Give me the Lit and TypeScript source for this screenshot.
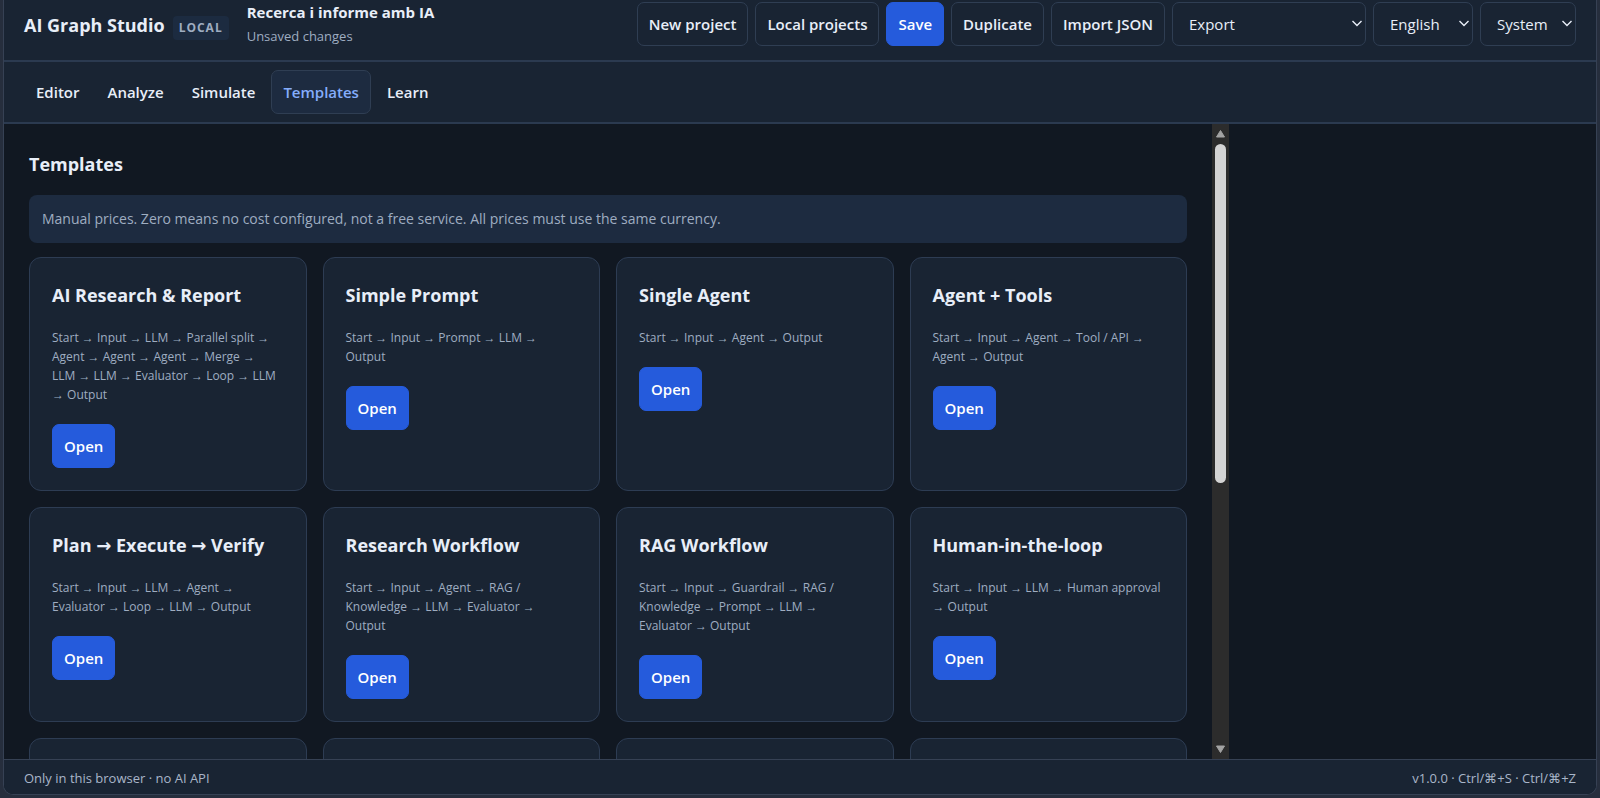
import { LitElement, html, css } from "lit";
import { customElement, property, state } from "lit/decorators.js";

interface Template {
  name: string;
  flow: string[];
}

const TEMPLATES: Template[] = [
  { name: "AI Research & Report", flow: ["Start", "Input", "LLM", "Parallel split", "Agent", "Agent", "Agent", "Merge", "LLM", "LLM", "Evaluator", "Loop", "LLM", "Output"] },
  { name: "Simple Prompt", flow: ["Start", "Input", "Prompt", "LLM", "Output"] },
  { name: "Single Agent", flow: ["Start", "Input", "Agent", "Output"] },
  { name: "Agent + Tools", flow: ["Start", "Input", "Agent", "Tool / API", "Agent", "Output"] },
  { name: "Plan → Execute → Verify", flow: ["Start", "Input", "LLM", "Agent", "Evaluator", "Loop", "LLM", "Output"] },
  { name: "Research Workflow", flow: ["Start", "Input", "Agent", "RAG / Knowledge", "LLM", "Evaluator", "Output"] },
  { name: "RAG Workflow", flow: ["Start", "Input", "Guardrail", "RAG / Knowledge", "Prompt", "LLM", "Evaluator", "Output"] },
  { name: "Human-in-the-loop", flow: ["Start", "Input", "LLM", "Human approval", "Output"] },
];

const TABS = ["Editor", "Analyze", "Simulate", "Templates", "Learn"];

const controls = css`
  button {
    box-sizing: border-box;
    height: 44px;
    margin: 0;
    padding: 0 11px;
    border: 1px solid #2f3e53;
    border-radius: 7px;
    background: transparent;
    color: #e8eef8;
    font: 600 15px/20px "Open Sans", "Noto Sans", sans-serif;
    white-space: nowrap;
    cursor: pointer;
  }
  .primary {
    border-color: #255bdc;
    background: #255bdc;
    color: #ffffff;
  }
`;

@customElement("menu-select")
export class MenuSelect extends LitElement {
  static styles = css`
    :host {
      display: block;
    }
    .box {
      display: grid;
      align-items: center;
    }
    select {
      grid-area: 1 / 1;
      box-sizing: border-box;
      width: 100%;
      height: 44px;
      margin: 0;
      padding: 0 20px 0 16px;
      border: 1px solid #2f3e53;
      border-radius: 7px;
      background: #192433;
      color: #e8eef8;
      font: 400 15px/20px "Open Sans", "Noto Sans", sans-serif;
      appearance: none;
    }
    svg {
      grid-area: 1 / 1;
      justify-self: end;
      margin-right: 3px;
      pointer-events: none;
    }
  `;
  @property() label = "";
  @property() value = "";

  render() {
    return html`<div class="box">
      <select aria-label=${this.label}>
        <option>${this.value}</option>
      </select>
      <svg width="12" height="12" viewBox="0 0 12 12" fill="none" stroke="#e8eef8" stroke-width="1.4">
        <path d="M1.5 3 6 7.5 10.5 3" />
      </svg>
    </div>`;
  }
}

@customElement("template-card")
export class TemplateCard extends LitElement {
  static styles = [
    controls,
    css`
      :host {
        display: block;
        box-sizing: border-box;
        padding: 22px;
        border: 1px solid #2d3c53;
        border-radius: 12px;
        background: #192433;
      }
      h3 {
        margin: 0 0 18px;
        font: 700 18px/30px "Open Sans", "DejaVu Sans", sans-serif;
        color: #e8eef8;
      }
      p {
        margin: 0 0 20px;
        padding-right: 3px;
        color: #9fadc1;
        font: 400 12px/19px "Open Sans", "Liberation Sans", sans-serif;
      }
    `,
  ];
  @property({ attribute: false }) template!: Template;

  render() {
    return html`
      <h3>${this.template.name}</h3>
      <p>${this.template.flow.join(" → ")}</p>
      <button class="primary">Open</button>
    `;
  }
}

@customElement("app-root")
export class AppRoot extends LitElement {
  static styles = [
    controls,
    css`
      :host {
        display: block;
        box-sizing: border-box;
        height: 100vh;
        padding: 0 3px 3px;
        background: #262e3d;
        color: #e8eef8;
        font: 400 14px/20px "Open Sans", "Noto Sans", sans-serif;
      }
      .frame {
        display: flex;
        flex-direction: column;
        box-sizing: border-box;
        height: 100%;
        border: 1px solid #364154;
        border-top: 0;
        border-radius: 0 0 10px 10px;
        overflow: hidden;
        background: #111822;
      }
      header {
        display: flex;
        align-items: center;
        gap: 18px;
        padding: 2px 20px 14px;
        border-bottom: 2px solid #2b3a50;
        background: #192433;
      }
      .brand {
        display: flex;
        align-items: baseline;
        gap: 8px;
        padding-top: 4px;
        font-size: 18px;
        line-height: 24px;
        font-weight: 700;
        white-space: nowrap;
      }
      .badge {
        padding: 2px 6px;
        border-radius: 4px;
        background: #1c2b40;
        color: #9fadc1;
        font-size: 12px;
        line-height: 20px;
        letter-spacing: 1px;
      }
      .project {
        display: flex;
        flex-direction: column;
        gap: 4px;
        white-space: nowrap;
      }
      .project strong {
        font-size: 15px;
        font-weight: 700;
      }
      .project span {
        color: #9fadc1;
        font-size: 13px;
      }
      .actions {
        display: flex;
        gap: 7px;
        margin-left: auto;
      }
      .export {
        width: 194px;
      }
      .language {
        width: 100px;
      }
      .theme {
        width: 96px;
      }
      nav {
        display: flex;
        gap: 4px;
        padding: 8px 20px;
        border-bottom: 2px solid #2b3a50;
        background: #192433;
      }
      nav button {
        border-color: transparent;
      }
      nav .active {
        border-color: #2f3e53;
        background: #1d2b40;
        color: #85adfb;
      }
      .body {
        display: grid;
        grid-template-columns: minmax(0, 1225fr) minmax(0, 367fr);
        flex: 1;
        min-height: 0;
      }
      .pane {
        display: flex;
        min-height: 0;
      }
      main {
        flex: 1;
        min-width: 0;
        padding: 24px 25px;
        overflow: hidden;
      }
      h2 {
        margin: 0 0 15px;
        font-size: 18px;
        line-height: 32px;
        font-weight: 700;
      }
      .notice {
        margin: 0 0 14px;
        padding: 14px 13px;
        border-radius: 8px;
        background: #1d2b40;
        color: #9fadc1;
        font-size: 14px;
      }
      .cards {
        display: grid;
        grid-template-columns: repeat(4, minmax(0, 1fr));
        gap: 16px;
      }
      .next {
        height: 200px;
        border: 1px solid #2d3c53;
        border-radius: 12px;
        background: #192433;
      }
      .scrollbar {
        display: flex;
        flex-direction: column;
        align-items: center;
        width: 17px;
        background: #2c2c2c;
      }
      .scrollbar svg {
        flex: none;
      }
      .track {
        flex: 1;
        width: 11px;
      }
      .thumb {
        height: 57%;
        border-radius: 6px;
        background: #d4d4d4;
      }
      footer {
        display: flex;
        justify-content: space-between;
        padding: 8px 20px 6px;
        border-top: 1px solid #364154;
        background: #192433;
        color: #a9b6c9;
        font-size: 13px;
      }
    `,
  ];

  @state() private tab = "Templates";

  render() {
    return html`
      <div class="frame">
        <header>
          <div class="brand">AI Graph Studio <span class="badge">LOCAL</span></div>
          <div class="project">
            <strong>Recerca i informe amb IA</strong>
            <span>Unsaved changes</span>
          </div>
          <div class="actions">
            <button>New project</button>
            <button>Local projects</button>
            <button class="primary">Save</button>
            <button>Duplicate</button>
            <button>Import JSON</button>
            <menu-select class="export" label="Export" value="Export"></menu-select>
            <menu-select class="language" label="Language" value="English"></menu-select>
            <menu-select class="theme" label="Theme" value="System"></menu-select>
          </div>
        </header>
        <nav>
          ${TABS.map(
            (t) => html`<button class=${t === this.tab ? "active" : ""} @click=${() => (this.tab = t)}>${t}</button>`
          )}
        </nav>
        <div class="body">
          <div class="pane">
            <main>
              <h2>Templates</h2>
              <p class="notice">
                Manual prices. Zero means no cost configured, not a free service. All prices must use the same currency.
              </p>
              <div class="cards">
                ${TEMPLATES.map((t) => html`<template-card .template=${t}></template-card>`)}
                ${[0, 1, 2, 3].map(() => html`<div class="next"></div>`)}
              </div>
            </main>
            <div class="scrollbar" aria-hidden="true">
              <svg width="17" height="20" viewBox="0 0 17 20" fill="#a3a3a3"><path d="M8.5 6.5 12.5 13h-8Z" stroke="#a3a3a3" stroke-linejoin="round" /></svg>
              <div class="track"><div class="thumb"></div></div>
              <svg width="17" height="20" viewBox="0 0 17 20" fill="#a3a3a3"><path d="M8.5 13.5 12.5 7h-8Z" stroke="#a3a3a3" stroke-linejoin="round" /></svg>
            </div>
          </div>
        </div>
        <footer>
          <span>Only in this browser · no AI API</span>
          <span>v1.0.0 · Ctrl/⌘+S · Ctrl/⌘+Z</span>
        </footer>
      </div>
    `;
  }
}
